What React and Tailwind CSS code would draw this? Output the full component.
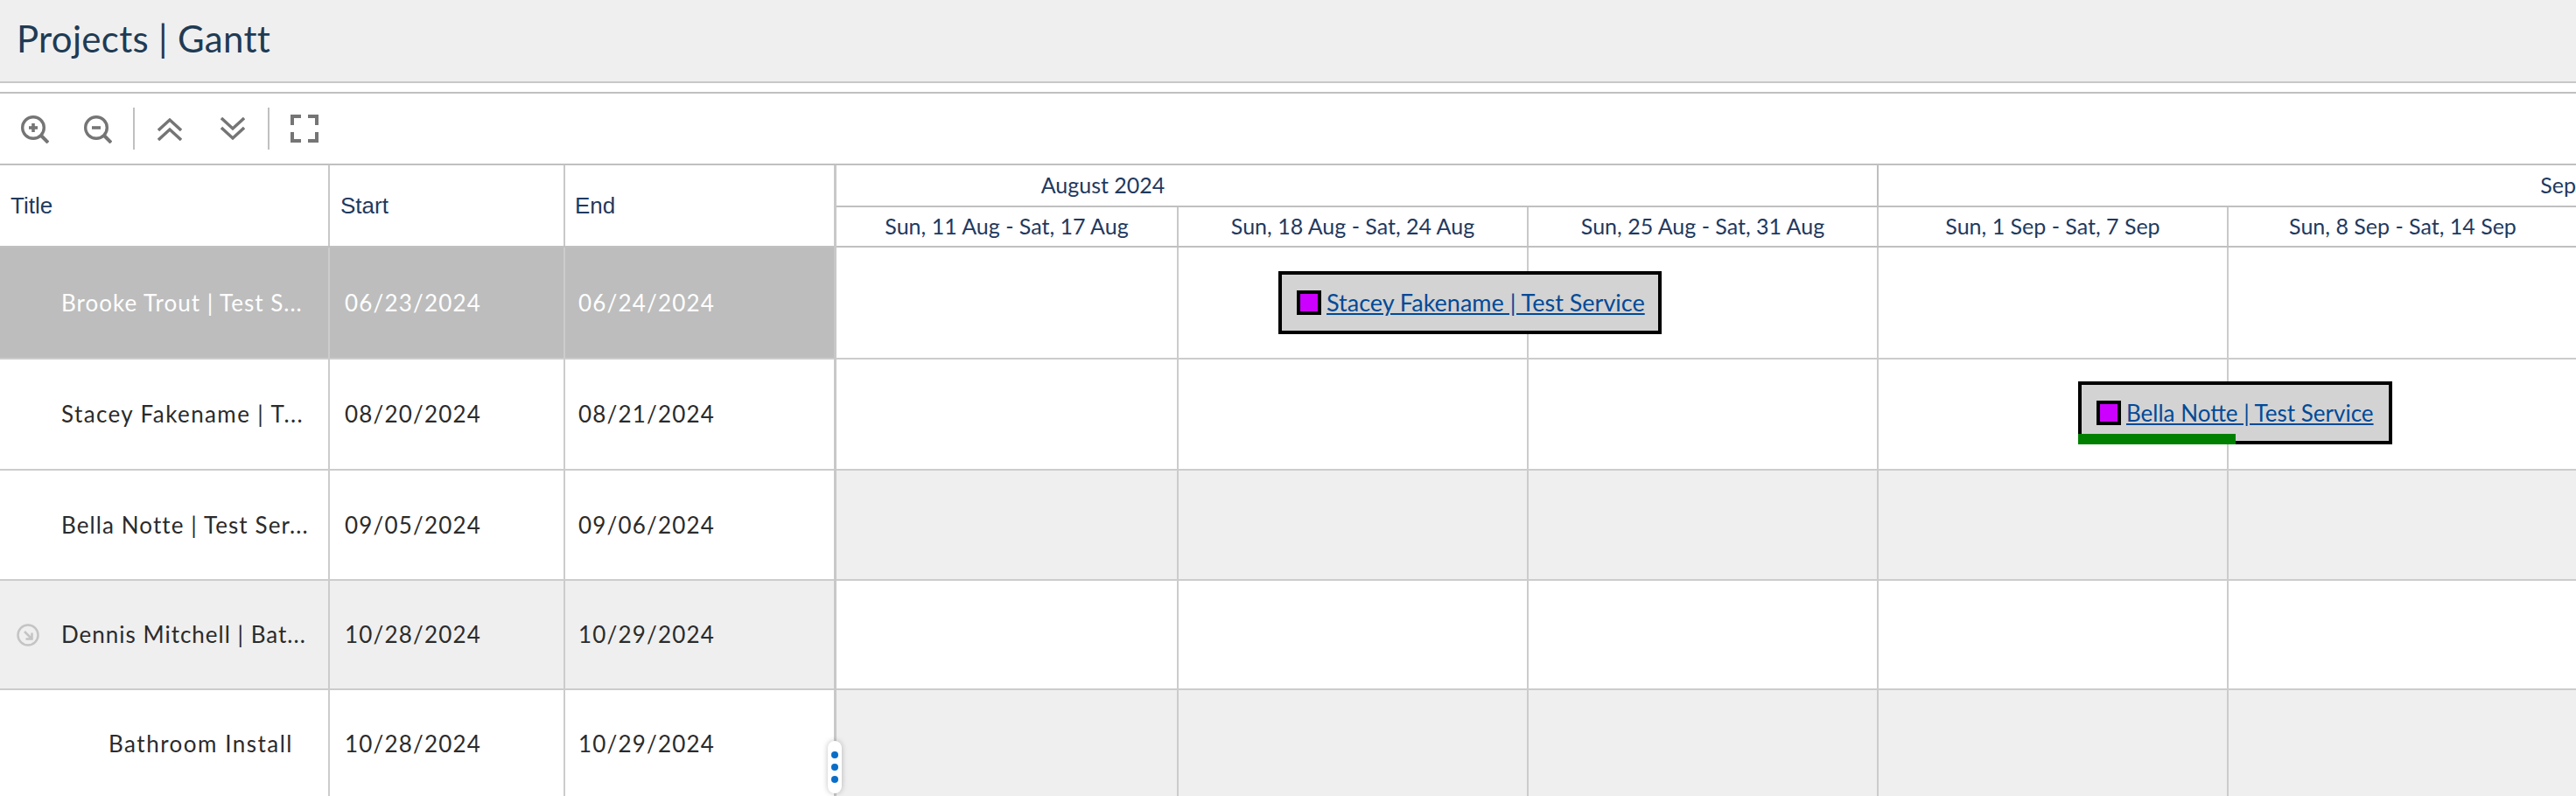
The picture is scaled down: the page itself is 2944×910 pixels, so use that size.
const FONT = "font-['Lato',sans-serif]"
const HEAD_FONT = "font-['Liberation_Sans',sans-serif]"

const rows = [
  { title: 'Brooke Trout | Test S...', start: '06/23/2024', end: '06/24/2024', height: 'h-[128px]', left: 'bg-[#bdbdbd] text-white', right: 'bg-white', tracking: 'tracking-[1px]' },
  { title: 'Stacey Fakename | T...', start: '08/20/2024', end: '08/21/2024', height: 'h-[127px]', left: 'bg-white text-[#2b2b2b]', right: 'bg-white', tracking: 'tracking-[1.4px]' },
  { title: 'Bella Notte | Test Ser...', start: '09/05/2024', end: '09/06/2024', height: 'h-[126px]', left: 'bg-white text-[#2b2b2b]', right: 'bg-[#efefef]', tracking: 'tracking-[1.1px]' },
  { title: 'Dennis Mitchell | Bat...', start: '10/28/2024', end: '10/29/2024', height: 'h-[125px]', left: 'bg-[#efefef] text-[#2b2b2b]', right: 'bg-white', tracking: 'tracking-[1px]', arrow: true },
  { title: 'Bathroom Install', start: '10/28/2024', end: '10/29/2024', height: 'h-[125px]', left: 'bg-white text-[#2b2b2b]', right: 'bg-[#efefef]', tracking: 'tracking-[1.5px]', child: true },
]

const weeks = [
  { label: 'Sun, 11 Aug - Sat, 17 Aug', width: 'w-[391px]' },
  { label: 'Sun, 18 Aug - Sat, 24 Aug', width: 'w-[400px]' },
  { label: 'Sun, 25 Aug - Sat, 31 Aug', width: 'w-[400px]' },
  { label: 'Sun, 1 Sep - Sat, 7 Sep', width: 'w-[400px]' },
  { label: 'Sun, 8 Sep - Sat, 14 Sep', width: 'w-[400px]' },
]

function ZoomIcon({ minus }) {
  return (
    <svg width="32" height="32" viewBox="0 0 32 32" fill="none" stroke="#757575" strokeWidth="3.4">
      <circle cx="14" cy="14" r="12.300" />
      <path d="M23 23l8 8" strokeWidth="4" />
      <path d="M9 14h10" strokeWidth="3.6" />
      {!minus && <path d="M14 9v10" strokeWidth="3.6" />}
    </svg>
  )
}

function ChevronsIcon({ down }) {
  return (
    <svg width="28" height="27" viewBox="0 0 28 27" fill="none" stroke="#757575" strokeWidth="3.4" className={down ? 'rotate-180' : ''}>
      <path d="M1 15L14 3l13 12" />
      <path d="M1 26l13-12 13 12" />
    </svg>
  )
}

function FullscreenIcon() {
  return (
    <svg width="32" height="32" viewBox="0 0 32 32" fill="none" stroke="#757575" strokeWidth="4">
      <path d="M12 2H2v10M20 2h10v10M2 20v10h10M30 20v10H20" />
    </svg>
  )
}

function Toolbar() {
  return (
    <div className="h-[82px] flex items-center border-b-2 border-[#c0c0c0] bg-white">
      <div className="ml-[24px] w-[72px] pt-[2px]"><ZoomIcon /></div>
      <div className="w-[56px] pt-[2px]"><ZoomIcon minus /></div>
      <div className="w-[2px] h-[48px] bg-[#c0c0c0]" />
      <div className="ml-[26px] w-[72px]"><ChevronsIcon /></div>
      <div className="w-[54px]"><ChevronsIcon down /></div>
      <div className="w-[2px] h-[48px] bg-[#c0c0c0]" />
      <div className="ml-[24px]"><FullscreenIcon /></div>
    </div>
  )
}

function RowArrow() {
  return (
    <svg width="28" height="28" viewBox="0 0 28 28" fill="none" className="absolute left-[18px] top-1/2 -translate-y-1/2">
      <circle cx="14" cy="14" r="11.500" stroke="#c4c4c4" strokeWidth="2.5" />
      <path d="M10 10l8 8M18.500 11.500v7h-7" stroke="#c4c4c4" strokeWidth="2.5" />
    </svg>
  )
}

function LeftPane() {
  return (
    <div className={`w-[953px] shrink-0 ${FONT}`}>
      <div className={`h-[94px] flex border-b-2 border-[#c0c0c0] text-[26px] text-[#1f3a5f] ${HEAD_FONT}`}>
        <div className="w-[377px] border-r-2 border-[#c8c8c8] pl-[12px] flex items-center">Title</div>
        <div className="w-[269px] border-r-2 border-[#c8c8c8] pl-[12px] flex items-center">Start</div>
        <div className="flex-1 pl-[11px] flex items-center">End</div>
      </div>
      {rows.map((r, i) => (
        <div key={i} className={`${r.height} flex border-b-2 border-[#cccccc] text-[26px] tracking-[1.2px] ${r.left}`}>
          <div className={`relative w-[377px] border-r-2 border-[#cccccc] flex items-center whitespace-nowrap ${r.tracking} ${r.child ? 'pl-[124px]' : 'pl-[70px]'}`}>
            {r.arrow && <RowArrow />}
            {r.title}
          </div>
          <div className="w-[269px] border-r-2 border-[#cccccc] pl-[17px] flex items-center">{r.start}</div>
          <div className="flex-1 pl-[15px] flex items-center">{r.end}</div>
        </div>
      ))}
    </div>
  )
}

function GanttBar({ name, className, progress }) {
  return (
    <div className={`absolute h-[72px] border-[4px] border-black bg-[#d3d3d3] flex items-center pl-[17px] ${className}`}>
      <span className="w-[28px] h-[28px] border-[4px] border-black bg-[#cc00ff] shrink-0 mr-[6px]" />
      <a href="#" className="text-[#004a97] underline whitespace-nowrap">{name}</a>
      {progress && <span className="absolute left-[-4px] bottom-[-4px] w-[180px] h-[12px] bg-[#008000]" />}
    </div>
  )
}

function Chart() {
  return (
    <div className={`relative flex-1 overflow-hidden border-l-[3px] border-[#c8c8c8] text-[#1f3a5f] ${FONT}`}>
      <div className="h-[48px] flex border-b-2 border-[#c0c0c0] text-[25px]">
        <div className="w-[1191px] shrink-0 border-r-2 border-[#c0c0c0] pr-[580px] flex items-center justify-center">August 2024</div>
        <div className="w-[1696px] shrink-0 flex items-center justify-center">September 2024</div>
      </div>
      <div className="h-[46px] flex border-b-2 border-[#c0c0c0] text-[25px]">
        {weeks.map((w) => (
          <div key={w.label} className={`${w.width} shrink-0 border-r-2 border-[#c8c8c8] flex items-center justify-center whitespace-nowrap`}>{w.label}</div>
        ))}
      </div>
      {rows.map((r, i) => (
        <div key={i} className={`${r.height} flex border-b-2 border-[#cccccc] ${r.right}`}>
          {weeks.map((w) => (
            <div key={w.label} className={`${w.width} shrink-0 border-r-2 border-[#cccccc]`} />
          ))}
        </div>
      ))}
      <GanttBar name="Stacey Fakename | Test Service" className="left-[505px] top-[121px] w-[438px] text-[27px]" />
      <GanttBar name="Bella Notte | Test Service" className="left-[1419px] top-[247px] w-[359px] text-[26px]" progress />
    </div>
  )
}

export default function App() {
  return (
    <div className="w-[2944px] h-[910px] overflow-hidden relative bg-white">
      <div className={`h-[95px] bg-[#efefef] border-b-2 border-[#c8c8c8] pl-[19px] flex items-center text-[#1f3b54] text-[42px] tracking-[0.3px] ${FONT}`}>
        <span className="-mt-[4px]">Projects | Gantt</span>
      </div>
      <div className="h-[10px]" />
      <div className="border-t-2 border-[#c0c0c0]">
        <Toolbar />
        <div className="flex">
          <LeftPane />
          <Chart />
        </div>
      </div>
      <div className="absolute left-[946px] top-[847px] w-[16px] h-[60px] rounded-full bg-white shadow-[0_0_6px_rgba(0,0,0,0.25)] flex flex-col items-center justify-center gap-[6px]">
        <span className="w-[8px] h-[8px] rounded-full bg-[#0a6ec8]" />
        <span className="w-[8px] h-[8px] rounded-full bg-[#0a6ec8]" />
        <span className="w-[8px] h-[8px] rounded-full bg-[#0a6ec8]" />
      </div>
    </div>
  )
}
